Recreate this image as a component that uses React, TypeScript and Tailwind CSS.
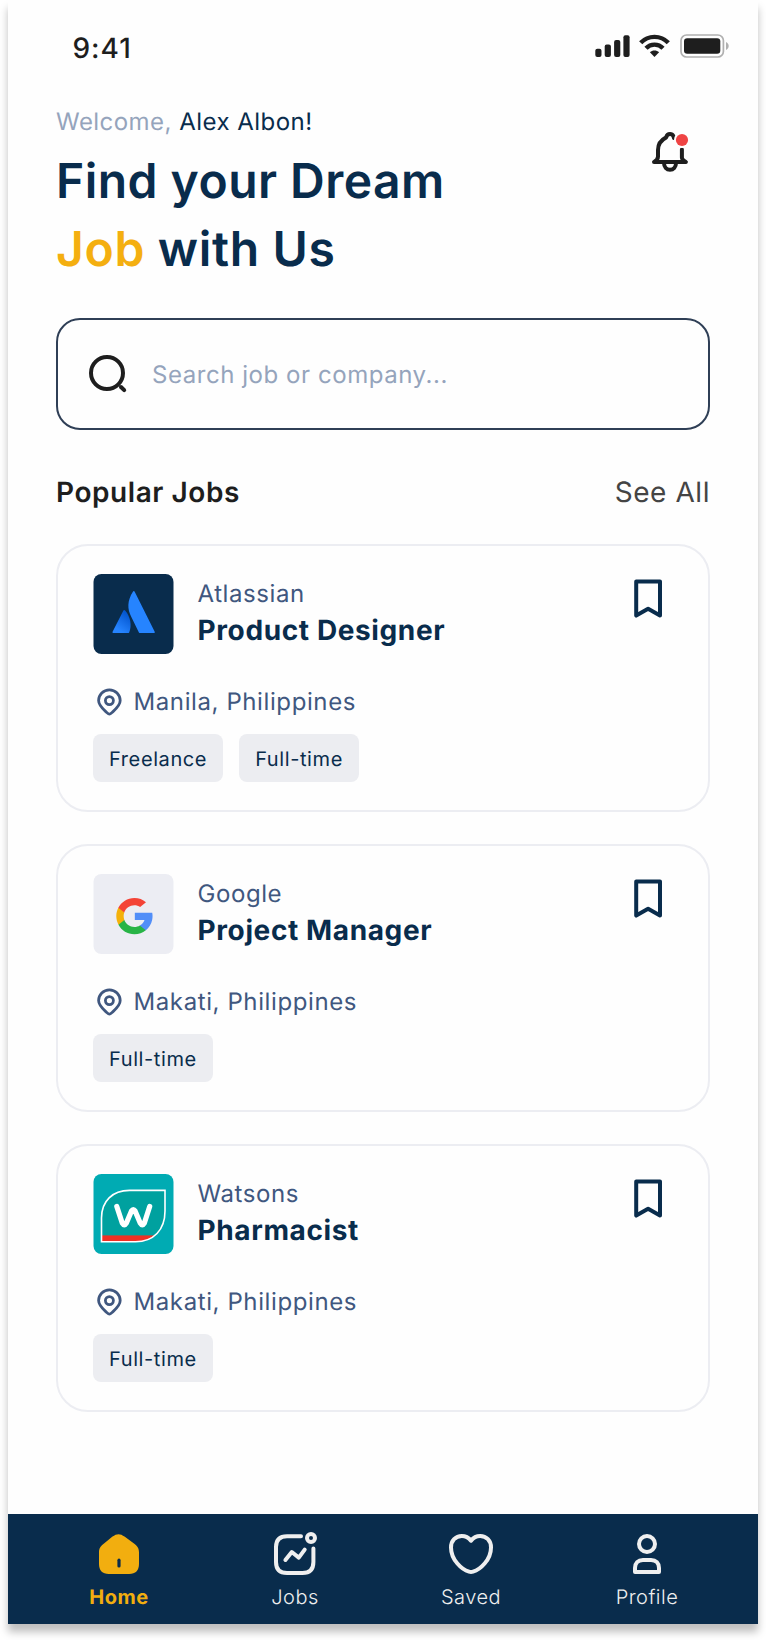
import type { ReactNode } from "react";

function SignalIcon() {
  return (
    <svg width="35" height="24" viewBox="0 0 35 24" fill="#1e1e1e">
      <rect x="0.3" y="14.8" width="6.2" height="8.2" rx="2" />
      <rect x="9.7" y="10.6" width="6.2" height="12.4" rx="2" />
      <rect x="19.1" y="6" width="6.2" height="17" rx="2" />
      <rect x="28.4" y="1.3" width="6.2" height="21.7" rx="2" />
    </svg>
  );
}

function WifiIcon() {
  return (
    <svg width="31" height="24" viewBox="0 0 31 24" fill="none" stroke="#1e1e1e" strokeWidth="4.4">
      <path d="M1.7 8.8C9.2 0.9 21.8 0.9 29.3 8.8" />
      <path d="M7 14.3C11.6 9.4 19.4 9.4 24 14.3" />
      <path d="M10.9 18.3C13.4 15.8 17.6 15.8 20.1 18.3L15.5 23Z" fill="#1e1e1e" stroke="none" />
    </svg>
  );
}

function BatteryIcon() {
  return (
    <svg width="50" height="24" viewBox="0 0 50 24">
      <rect x="1" y="1" width="42.4" height="22" rx="5.6" fill="none" stroke="#b0b0b0" strokeWidth="1.7" />
      <rect x="4" y="4.3" width="36.3" height="15.4" rx="3.2" fill="#1e1e1e" />
      <path d="M46 8C49.6 9.4 49.6 14.6 46 16Z" fill="#b0b0b0" />
    </svg>
  );
}

function BellIcon() {
  return (
    <svg width="40" height="44" viewBox="0 0 40 44" fill="none">
      <g stroke="#1e1e1e" strokeWidth="4" strokeLinecap="round" strokeLinejoin="round">
        <path d="M31.9 19.5V27.5C31.9 29.5 34 31 35.9 32H4C6.3 30.8 8 29 8 26.6V20C8 14 10.8 10.2 16.2 7.4C16.6 5.5 17.9 4 20 4C21.6 4 22.7 4.8 23.4 6.2L24 8" />
        <path d="M14 33C14 36.8 16.6 39.8 20 39.8C23.4 39.8 26 36.8 26 33" />
      </g>
      <circle cx="32" cy="10" r="8" fill="#fefefe" />
      <circle cx="32" cy="10" r="6.1" fill="#ef4444" />
    </svg>
  );
}

function SearchIcon() {
  return (
    <svg width="40" height="40" viewBox="0 0 40 40" fill="none" stroke="#1e1e1e" strokeWidth="4" strokeLinecap="round">
      <circle cx="18" cy="18" r="16" />
      <path d="M32 32L35.2 35.2" />
    </svg>
  );
}

function BookmarkIcon() {
  return (
    <svg width="28" height="40" viewBox="0 0 28 40" fill="none" stroke="#092c4c" strokeWidth="4" strokeLinejoin="round">
      <path d="M2.2 2.4H26V36.6L14.1 29.8L2.2 36.6Z" />
    </svg>
  );
}

function PinIcon() {
  return (
    <svg width="26" height="28" viewBox="0 0 26 28" fill="none" stroke="#40577f" strokeWidth="2.8" strokeLinejoin="round">
      <path d="M13.4 26.2C12.6 26.2 11.6 25.2 9.8 23.6C6.4 20.6 2.6 17.2 2.6 12.6C2.6 6.6 7.4 1.8 13.4 1.8C19.4 1.8 24.2 6.6 24.2 12.6C24.2 17.2 20.4 20.6 17 23.6C15.2 25.2 14.2 26.2 13.4 26.2Z" />
      <circle cx="13.4" cy="12.6" r="4" />
    </svg>
  );
}

function AtlassianLogo() {
  return (
    <svg width="81" height="80" viewBox="-0.5 0 81 80">
      <defs>
        <linearGradient id="atl" x1="37" y1="40" x2="24" y2="57" gradientUnits="userSpaceOnUse">
          <stop offset="0" stopColor="#0052cc" />
          <stop offset="0.92" stopColor="#2684ff" />
        </linearGradient>
      </defs>
      <rect width="80" height="80" rx="8" fill="#092c4c" />
      <path d="M31.6 36.5C31.1 35.8 30.3 35.8 29.9 36.6L19.1 57.8C18.8 58.5 19.2 59.1 19.9 59.1H34.6C35.1 59.1 35.5 58.9 35.7 58.4C38.7 51.5 36.9 42.3 31.6 36.5Z" fill="url(#atl)" />
      <path d="M39.4 17.7C33.6 26.8 33.8 34.8 37.6 42.4L45.4 58.4C45.6 58.9 46 59.1 46.5 59.1H60.3C61.1 59.1 61.5 58.4 61.2 57.8L41.2 17.7C40.8 16.9 39.9 16.9 39.4 17.7Z" fill="#2684ff" />
    </svg>
  );
}

function GoogleLogo() {
  return (
    <svg width="81" height="80" viewBox="-0.5 0 81 80">
      <rect width="80" height="80" rx="8" fill="#ecedf3" />
      <g transform="translate(22.8 24) scale(0.0708)">
        <path fill="#f4b10b" d="M113.47,309.408L95.648,375.94l-65.139,1.378C11.042,341.211,0,299.9,0,256c0-42.451,10.324-82.483,28.624-117.732h0.014l57.992,10.632l25.404,57.644c-5.317,15.501-8.215,32.141-8.215,49.456C103.821,274.792,107.225,292.797,113.47,309.408z" />
        <path fill="#518ef8" d="M507.527,208.176C510.467,223.662,512,239.655,512,256c0,18.328-1.927,36.206-5.598,53.451c-12.462,58.683-45.025,109.925-90.134,146.187l-0.014-0.014l-73.044-3.727l-10.338-64.535c29.932-17.554,53.324-45.025,65.646-77.911h-136.89V208.176h138.887L507.527,208.176L507.527,208.176z" />
        <path fill="#28b446" d="M416.253,455.624l0.014,0.014C372.396,490.901,316.666,512,256,512c-97.491,0-182.252-54.491-225.491-134.681l82.961-67.91c21.619,57.698,77.278,98.771,142.53,98.771c28.047,0,54.323-7.582,76.87-20.818L416.253,455.624z" />
        <path fill="#f44336" d="M419.404,58.936l-82.933,67.896c-23.335-14.586-50.919-23.012-80.471-23.012c-66.729,0-123.429,42.957-143.965,102.724l-83.397-68.276h-0.014C71.23,56.123,157.06,0,256,0C318.115,0,375.068,22.126,419.404,58.936z" />
      </g>
    </svg>
  );
}

const LEAF = "M36 16.4H71.5V37C71.5 56 60 67.8 42 67.8H8V44C8 27 19 16.4 36 16.4Z";

function WatsonsLogo() {
  return (
    <svg width="81" height="80" viewBox="-0.5 0 81 80">
      <defs>
        <clipPath id="leaf">
          <path d={LEAF} />
        </clipPath>
      </defs>
      <rect width="80" height="80" rx="8" fill="#00abb3" />
      <path d={LEAF} fill="#00a19f" />
      <rect x="8" y="61.4" width="64" height="8" fill="#ef3024" clipPath="url(#leaf)" />
      <path d={LEAF} fill="none" stroke="#ffffff" strokeWidth="1.6" />
      <path d="M23.3 32.5L28.8 49.2Q30.8 52.6 32.8 49.2L38 37Q39.8 34.2 41.6 37L46.8 49.2Q48.8 52.6 50.8 49.2L56.2 32.5" fill="none" stroke="#ffffff" strokeWidth="5.2" strokeLinecap="round" strokeLinejoin="round" />
    </svg>
  );
}

function HomeIcon() {
  return (
    <svg width="44" height="44" viewBox="0 0 44 44">
      <path d="M15.5 4.6C19.7 1.3 23.3 1.3 27.5 4.6L37 11.6C40.6 14.4 42 16.4 42 20.6V32C42 38.4 38.6 42 32.2 42H11.8C5.4 42 2 38.4 2 32V20.6C2 16.4 3.4 14.4 7 11.6Z" fill="#f2ae0f" />
      <path d="M22 28.2V34" stroke="#092c4c" strokeWidth="3.2" strokeLinecap="round" />
    </svg>
  );
}

function JobsIcon() {
  return (
    <svg width="44" height="44" viewBox="0 0 44 44" fill="none" stroke="#efefef" strokeWidth="4" strokeLinecap="round" strokeLinejoin="round">
      <path d="M28 4.2H14C6.6 4.2 3 7.8 3 15V30C3 37.4 6.6 41 14 41H29.5C36.8 41 40.4 37.4 40.4 30V16.4" />
      <path d="M12.4 28L18.8 20L25.8 25.6L31.7 17.6" />
      <circle cx="38" cy="6" r="4" />
    </svg>
  );
}

function HeartIcon() {
  return (
    <svg width="44" height="44" viewBox="0 0 44 44" fill="none" stroke="#efefef" strokeWidth="4" strokeLinejoin="round">
      <path d="M22 8.7C19.6 5.6 16.4 4 12.8 4C6.6 4 2 8.7 2 15.4C2 28 13 37.6 20 39.7C21.3 40.1 22.7 40.1 24 39.7C31 37.6 42 28 42 15.4C42 8.7 37.4 4 31.2 4C27.6 4 24.4 5.6 22 8.7Z" />
    </svg>
  );
}

function ProfileIcon() {
  return (
    <svg width="44" height="44" viewBox="0 0 44 44" fill="none" stroke="#efefef" strokeWidth="4" strokeLinejoin="round">
      <circle cx="22" cy="12" r="8" />
      <path d="M10 40V36C10 31 13 28 18 28H26C31 28 34 31 34 36V40Z" />
    </svg>
  );
}

type Job = { company: string; title: string; place: string; tags: string[]; logo: ReactNode };

const jobs: Job[] = [
  { company: "Atlassian", title: "Product Designer", place: "Manila, Philippines", tags: ["Freelance", "Full-time"], logo: <AtlassianLogo /> },
  { company: "Google", title: "Project Manager", place: "Makati, Philippines", tags: ["Full-time"], logo: <GoogleLogo /> },
  { company: "Watsons", title: "Pharmacist", place: "Makati, Philippines", tags: ["Full-time"], logo: <WatsonsLogo /> },
];

function JobCard({ job }: { job: Job }) {
  return (
    <article className="h-[268px] rounded-[32px] border-2 border-[#ecedf2] pt-7 pr-[46px] pl-[35px]">
      <div className="flex h-20">
        {job.logo}
        <div className="ml-[23.5px] flex-1 pt-[3px]">
          <p className="text-2xl leading-[34px] font-[370] tracking-[0.024em] text-[#40577f]">{job.company}</p>
          <h3 className="text-[28px] leading-[38px] font-bold tracking-[0.022em] text-[#092c4c]">{job.title}</h3>
        </div>
        <button aria-label="Save job" className="mt-[5px] h-10 w-7">
          <BookmarkIcon />
        </button>
      </div>
      <div className="mt-[34px] flex h-7 items-center gap-[12px] pl-[2.5px]">
        <PinIcon />
        <p className="text-2xl leading-7 font-[370] tracking-[0.025em] text-[#40577f]">{job.place}</p>
      </div>
      <div className="mt-[18px] flex gap-4">
        {job.tags.map((t) => (
          <span key={t} className="h-12 rounded-lg bg-[#ecedf1] px-4 text-xl leading-[50px] tracking-[0.03em] text-[#092c4c]">
            {t}
          </span>
        ))}
      </div>
    </article>
  );
}

const tabs = [
  { label: "Home", icon: <HomeIcon />, active: true },
  { label: "Jobs", icon: <JobsIcon />, active: false },
  { label: "Saved", icon: <HeartIcon />, active: false },
  { label: "Profile", icon: <ProfileIcon />, active: false },
];

export default function App() {
  return (
    <div className="h-[1640px] overflow-hidden bg-white px-2 font-['Inter',sans-serif] antialiased [text-rendering:geometricPrecision]">
      <div className="flex h-[1624px] w-[750px] flex-col bg-[#fefefe] shadow-[0_8px_8px_rgba(0,0,0,0.25)]">
        <div className="flex h-[104px] shrink-0 items-start justify-between pr-7 pl-[64.5px]">
          <p className="mt-8 text-[28px] leading-8 font-[450] tracking-[0.035em] text-[#1e1e1e]">9:41</p>
          <div className="mt-[34px] flex items-center">
            <SignalIcon />
            <div className="ml-[9px]"><WifiIcon /></div>
            <div className="ml-[10px]"><BatteryIcon /></div>
          </div>
        </div>

        <header className="flex shrink-0 justify-between pr-[68px] pl-12">
          <div>
            <p className="text-2xl leading-[35px] font-[370] tracking-[0.019em] text-[#95a4bc]">
              Welcome, <span className="font-normal tracking-[0.02em] text-[#092c4c]">Alex Albon!</span>
            </p>
            <h1 className="mt-2 text-5xl leading-[68px] font-semibold tracking-[0.01em] text-[#092c4c]">
              Find your Dream
              <br />
              <span className="tracking-[0.014em]">
                <span className="text-[#f4af10]">Job</span> with Us
              </span>
            </h1>
          </div>
          <button aria-label="Notifications" className="mt-[26px] h-11 w-10">
            <BellIcon />
          </button>
        </header>

        <main className="flex flex-1 flex-col px-12">
          <div className="mt-[35px] flex h-28 items-center rounded-3xl border-2 border-[#2f3f56] pt-0.5 pl-[31px]">
            <SearchIcon />
            <span className="ml-[23px] text-2xl font-[370] tracking-[0.023em] text-[#95a4bc]">Search job or company...</span>
          </div>
          <div className="mt-11 flex items-center justify-between leading-9">
            <h2 className="text-[28px] leading-9 font-semibold tracking-[0.02em] text-[#1e1e1e]">Popular Jobs</h2>
            <a className="text-[28px] leading-9 tracking-[0.02em] text-[#444444]">See All</a>
          </div>
          <section className="mt-[34px] flex flex-col gap-8">
            {jobs.map((job) => (
              <JobCard key={job.company} job={job} />
            ))}
          </section>
        </main>

        <nav className="grid h-[110px] shrink-0 grid-cols-4 bg-[#092c4c] px-[23px] pt-[18px]">
          {tabs.map((t) => (
            <a key={t.label} className="flex flex-col items-center">
              {t.icon}
              <span
                className={
                  t.active
                    ? "mt-[7px] text-xl leading-7 font-bold tracking-[0.025em] text-[#f2ae0f]"
                    : "mt-[7px] text-xl leading-7 font-[360] tracking-[0.025em] text-[#efefef]"
                }
              >
                {t.label}
              </span>
            </a>
          ))}
        </nav>
      </div>
    </div>
  );
}
